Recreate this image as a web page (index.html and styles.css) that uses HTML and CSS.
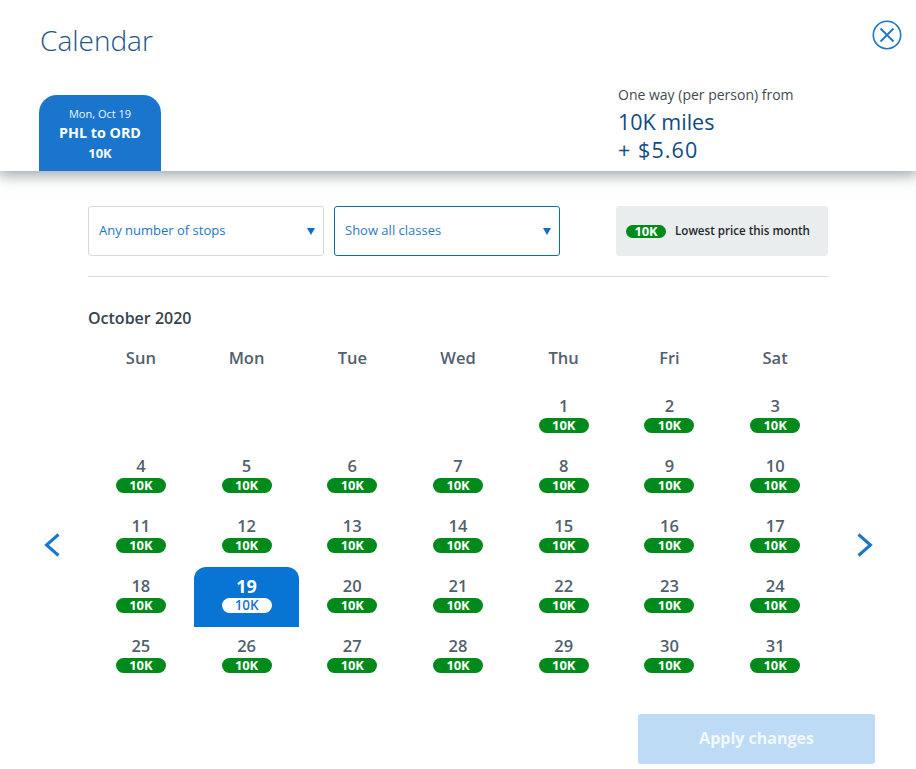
FILE: index.html
```html
<!DOCTYPE html>
<html lang="en">
<head>
<meta charset="utf-8">
<title>Calendar</title>
<link rel="stylesheet" href="styles.css">
</head>
<body>
<div class="modal">
  <header class="head">
    <div class="head-top">
      <h1 class="title">Calendar</h1>
      <button class="close" aria-label="Close">
        <svg width="30" height="30" viewBox="0 0 30 30" fill="none" stroke="#1a76cc"><circle cx="15" cy="15" r="13.7" stroke-width="1.6"/><path d="M8.5 8.5l13 13M21.500 8.500l-13 13" stroke-width="1.8"/></svg>
      </button>
    </div>
    <div class="head-bottom">
      <div class="tab">
        <div class="tab-date">Mon, Oct 19</div>
        <div class="tab-route">PHL to ORD</div>
        <div class="tab-price">10K</div>
      </div>
      <div class="summary">
        <div class="summary-label">One way (per person) from</div>
        <div class="summary-price">10K miles</div>
        <div class="summary-price summary-fee">+ $5.60</div>
      </div>
    </div>
  </header>
  <main class="body">
    <div class="filters">
      <div class="select"><span>Any number of stops</span><i class="caret"></i></div>
      <div class="select select-active"><span>Show all classes</span><i class="caret"></i></div>
      <div class="legend"><span class="pill pill-legend">10K</span><span class="legend-text">Lowest price this month</span></div>
    </div>
    <div class="month">October 2020</div>
    <div class="cal">
      <div class="dow">Sun</div><div class="dow">Mon</div><div class="dow">Tue</div><div class="dow">Wed</div><div class="dow">Thu</div><div class="dow">Fri</div><div class="dow">Sat</div>
      <div class="day"></div><div class="day"></div><div class="day"></div><div class="day"></div>
      <div class="day"><b>1</b><span class="pill">10K</span></div>
      <div class="day"><b>2</b><span class="pill">10K</span></div>
      <div class="day"><b>3</b><span class="pill">10K</span></div>
      <div class="day"><b>4</b><span class="pill">10K</span></div>
      <div class="day"><b>5</b><span class="pill">10K</span></div>
      <div class="day"><b>6</b><span class="pill">10K</span></div>
      <div class="day"><b>7</b><span class="pill">10K</span></div>
      <div class="day"><b>8</b><span class="pill">10K</span></div>
      <div class="day"><b>9</b><span class="pill">10K</span></div>
      <div class="day"><b>10</b><span class="pill">10K</span></div>
      <div class="day"><b>11</b><span class="pill">10K</span></div>
      <div class="day"><b>12</b><span class="pill">10K</span></div>
      <div class="day"><b>13</b><span class="pill">10K</span></div>
      <div class="day"><b>14</b><span class="pill">10K</span></div>
      <div class="day"><b>15</b><span class="pill">10K</span></div>
      <div class="day"><b>16</b><span class="pill">10K</span></div>
      <div class="day"><b>17</b><span class="pill">10K</span></div>
      <div class="day"><b>18</b><span class="pill">10K</span></div>
      <div class="day day-selected"><b>19</b><span class="pill">10K</span></div>
      <div class="day"><b>20</b><span class="pill">10K</span></div>
      <div class="day"><b>21</b><span class="pill">10K</span></div>
      <div class="day"><b>22</b><span class="pill">10K</span></div>
      <div class="day"><b>23</b><span class="pill">10K</span></div>
      <div class="day"><b>24</b><span class="pill">10K</span></div>
      <div class="day"><b>25</b><span class="pill">10K</span></div>
      <div class="day"><b>26</b><span class="pill">10K</span></div>
      <div class="day"><b>27</b><span class="pill">10K</span></div>
      <div class="day"><b>28</b><span class="pill">10K</span></div>
      <div class="day"><b>29</b><span class="pill">10K</span></div>
      <div class="day"><b>30</b><span class="pill">10K</span></div>
      <div class="day"><b>31</b><span class="pill">10K</span></div>
    </div>
    <button class="arrow arrow-prev" aria-label="Previous month"><svg width="16" height="24" viewBox="0 0 16 24" fill="none" stroke="#1a76cc" stroke-width="3"><path d="M14.500 1.500L2.500 12l12 10.500"/></svg></button>
    <button class="arrow arrow-next" aria-label="Next month"><svg width="16" height="24" viewBox="0 0 16 24" fill="none" stroke="#1a76cc" stroke-width="3"><path d="M1.500 1.500L13.500 12l-12 10.500"/></svg></button>
    <div class="actions"><button class="apply">Apply changes</button></div>
  </main>
</div>
</body>
</html>
```
FILE: styles.css
```css
* { box-sizing: border-box; }
html, body { margin: 0; padding: 0; }
body { width: 916px; height: 769px; overflow: hidden; background: #fff; font-family: "Open Sans", "Noto Sans", sans-serif; color: #36495a; }
.modal { display: flex; flex-direction: column; height: 769px; }
.head { height: 171px; padding: 0 14px 0 39px; background: #fff; box-shadow: 0 2px 14px 2px rgba(70, 85, 95, .55); position: relative; z-index: 1; display: flex; flex-direction: column; }
.head-top { display: flex; justify-content: space-between; height: 95px; }
.title { margin: 21px 0 0 1px; font-size: 28px; line-height: 38px; font-weight: 300; color: #1e5582; }
.close { margin: 20px 0 0; padding: 0; border: 0; background: none; width: 30px; height: 30px; }
.head-bottom { display: flex; justify-content: space-between; height: 76px; }
.tab { width: 122px; height: 76px; background: #1a76cc; border-radius: 18px 18px 0 0; color: #fff; text-align: center; padding-top: 11px; }
.tab-date { font-size: 11px; line-height: 15px; font-weight: 400; color: #f0f6fc; }
.tab-route { font-size: 14.300px; line-height: 20px; font-weight: 700; margin-top: 2px; }
.tab-price { font-size: 13px; line-height: 19px; font-weight: 700; margin-top: 1px; }
.summary { width: 284px; margin-top: -10px; }
.summary-label { font-size: 14px; line-height: 19px; color: #3f4a52; }
.summary-price { font-size: 21.500px; line-height: 28px; color: #0f4c81; }
.summary-label + .summary-price { margin-top: 4px; }
.summary-fee { letter-spacing: 1.100px; }
.body { position: relative; flex: 1; padding: 35px 88px 0; }
.filters { display: flex; height: 71px; padding-bottom: 21px; border-bottom: 1px solid #d8dcdf; }
.select { height: 50px; display: flex; align-items: center; justify-content: space-between; padding: 0 8px 0 10px; border: 1px solid #d5d9dc; border-radius: 3px; font-size: 13px; color: #1a76cc; }
.select span { margin-top: -2px; }
.select:first-child { width: 236px; margin-right: 10px; }
.select-active { width: 226px; margin-right: 56px; border-color: #0e6ab8; padding-right: 8px; color: #2b7cc4; }
.caret { width: 0; height: 0; border-left: 4px solid transparent; border-right: 4px solid transparent; border-top: 7px solid #0e6fc2; }
.legend { width: 212px; height: 50px; display: flex; align-items: center; padding-left: 10px; background: #e9edee; border-radius: 3px; }
.legend-text { margin: -2px 0 0 9px; font-size: 11.600px; font-weight: 600; color: #23282c; }
.pill { display: block; width: 50px; height: 15px; border-radius: 8px; background: #008a1c; color: #fff; font-size: 13px; line-height: 15px; font-weight: 700; text-align: center; letter-spacing: -.1px; }
.pill-legend { width: 40px; height: 13px; line-height: 13px; }
.month { margin-top: 30px; font-size: 16px; line-height: 22px; font-weight: 600; color: #36434f; }
.cal { display: grid; grid-template-columns: repeat(7, 1fr); grid-template-rows: 41px repeat(5, 60px); margin-top: 17px; }
.dow { text-align: center; font-size: 16.500px; line-height: 24px; font-weight: 600; color: #52606d; }
.day { display: flex; flex-direction: column; align-items: center; padding-top: 8px; }
.day b { font-size: 16.500px; line-height: 22px; margin-bottom: 1px; font-weight: 600; color: #52606d; }
.day-selected { background: #0874d4; border-radius: 12px 12px 0 0; }
.day-selected b { color: #fff; font-size: 18px; font-weight: 700; }
.day-selected .pill { background: #fff; color: #1a76cc; font-size: 13.500px; font-weight: 600; }
.arrow { position: absolute; top: 362px; width: 16px; height: 24px; padding: 0; border: 0; background: none; }
.arrow-prev { left: 44px; }
.arrow-next { left: 857px; }
.actions { display: flex; justify-content: flex-end; margin-top: 27px; margin-right: -47px; }
.apply { width: 237px; height: 50px; padding: 0 0 2px; border: 0; border-radius: 3px; background: #bddbf5; color: #f2f8fd; font-family: inherit; font-size: 16px; font-weight: 700; }
```
